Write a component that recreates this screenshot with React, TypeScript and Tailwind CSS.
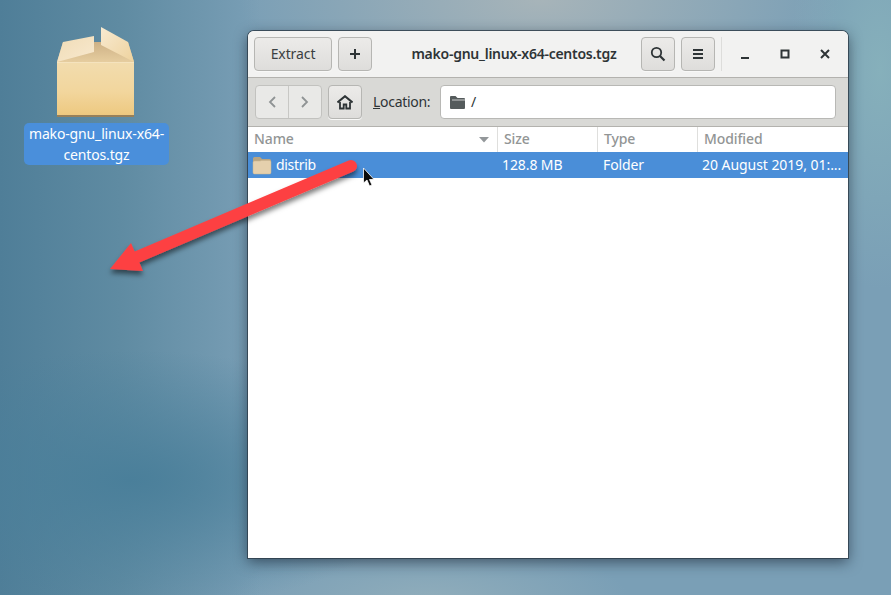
import React from "react";

function Btn({ className, children }: { className: string; children?: React.ReactNode }) {
  return (
    <div className={"flex items-center justify-center rounded-[4px] border border-[#b6b6b3] bg-gradient-to-b from-[#ecebe9] to-[#dedddb] shadow-[0_1px_0_#f8f8f7] text-[#2e3436] " + className}>
      {children}
    </div>
  );
}

function Box() {
  return (
    <svg width="82" height="96" viewBox="0 0 82 96" className="block">
      <defs>
        <linearGradient id="body" x1="0" y1="0" x2="0" y2="1">
          <stop offset="0" stopColor="#f2dcae" />
          <stop offset="0.55" stopColor="#f2d69d" />
          <stop offset="1" stopColor="#edc87f" />
        </linearGradient>
        <linearGradient id="top" x1="0" y1="0" x2="0" y2="1">
          <stop offset="0" stopColor="#cdb186" />
          <stop offset="1" stopColor="#e6cd9f" />
        </linearGradient>
        <linearGradient id="flapL" x1="0" y1="0" x2="1" y2="1">
          <stop offset="0" stopColor="#f0dcb6" />
          <stop offset="1" stopColor="#f8e9cf" />
        </linearGradient>
        <linearGradient id="flapR" x1="0" y1="0" x2="1" y2="1">
          <stop offset="0" stopColor="#f8ead1" />
          <stop offset="1" stopColor="#eed29d" />
        </linearGradient>
      </defs>
      <path d="M3 35 L9 15 L74 15 L80 35 Z" fill="url(#top)" />
      <path d="M3 35 H80 V88 Q80 89 79 89 H4 Q3 89 3 88 Z" fill="url(#body)" />
      <path d="M3 35 H80 V36 H3 Z" fill="#f7e6c4" opacity="0.7" />
      <rect x="3" y="88" width="77" height="2" fill="#97805a" />
      <path d="M3 35 L9 15 L40 9 L40 25 Z" fill="url(#flapL)" />
      <path d="M47 0 L74 15 L80 35 L47 18 Z" fill="url(#flapR)" />
    </svg>
  );
}

function Arrow() {
  return (
    <svg width="891" height="595" viewBox="0 0 891 595" className="absolute left-0 top-0 pointer-events-none">
      <defs>
        <filter id="sh" x="-10%" y="-10%" width="120%" height="130%">
          <feDropShadow dx="0" dy="4" stdDeviation="2.5" floodColor="#000" floodOpacity="0.5" />
        </filter>
      </defs>
      <g filter="url(#sh)">
        <path d="M351 166 L137 257" stroke="#fd4143" strokeWidth="12" strokeLinecap="round" fill="none" />
        <path d="M110 269 L131 243 L143 271 Z" fill="#fd4143" />
      </g>
    </svg>
  );
}

function Cursor() {
  return (
    <svg width="14" height="22" viewBox="0 0 14 22" className="absolute left-[362px] top-[167px]">
      <path d="M1.5 1 V16 L5 13 L7.5 19 L10 18 L7.5 12.5 L12 12.5 Z" fill="#0a0a0a" stroke="#fff" strokeWidth="0.8" />
    </svg>
  );
}

function FolderSmall() {
  return (
    <svg width="20" height="20" viewBox="0 0 20 20">
      <path d="M1 3.5 Q1 2 2.5 2 H8 L10 4 H17.5 Q19 4 19 5.5 V10 H1 Z" fill="#b9a582" />
      <path d="M1 7.5 Q1 6 2.5 6 H8 L9.5 5.5 H17.5 Q19 5.5 19 7 V17.5 Q19 19 17.5 19 H2.5 Q1 19 1 17.5 Z" fill="#e5d0ad" stroke="#c9b48f" strokeWidth="0.5" />
    </svg>
  );
}

export default function App() {
  return (
    <div
      className="relative w-[891px] h-[595px] overflow-hidden flex bg-[#7a9fb6] bg-[radial-gradient(ellipse_300px_130px_at_130px_480px,#4a7f9a_0%,transparent_100%),linear-gradient(90deg,#4f7e98_0px,#5f8ba2_120px,transparent_260px),radial-gradient(ellipse_300px_130px_at_540px_0px,#a7b4b9_0%,transparent_100%),radial-gradient(ellipse_90px_220px_at_880px_70px,#86b0bb_0%,transparent_100%),radial-gradient(ellipse_200px_60px_at_430px_600px,#90adbb_0%,transparent_100%)]"
      style={{ fontFamily: '"Noto Sans", "Open Sans", sans-serif' }}
    >
      <div className="w-[248px] shrink-0 flex flex-col items-start pt-[27px] pl-[24px]">
        <div className="ml-[30px] w-[82px] h-[96px]"><Box /></div>
        <div className="w-[145px] h-[42px] rounded-[5px] bg-[#4a8fdb] text-white text-[14px] tracking-[-0.15px] leading-[21px] text-center">
          <div>mako-gnu_linux-x64-</div>
          <div>centos.tgz</div>
        </div>
      </div>

      <div className="mt-[31px] w-[600px] h-[527px] rounded-t-[6px] overflow-hidden flex flex-col bg-white leading-[20px] tracking-[-0.1px] shadow-[0_0_0_1px_rgba(45,60,72,0.8),0_4px_14px_rgba(20,30,45,0.6)]">
        {/* header bar */}
        <div className="h-[47px] shrink-0 flex items-center pl-[6px] bg-[#f2f2f1] border-b border-[#b3b2ae]">
          <Btn className="w-[78px] h-[34px] text-[14px] text-[#3a3f41]">Extract</Btn>
          <Btn className="ml-[6px] w-[34px] h-[34px]">
            <svg width="14" height="14" viewBox="0 0 14 14"><path d="M7 2 V12 M2 7 H12" stroke="#2e3436" strokeWidth="2" /></svg>
          </Btn>
          <div className="flex-1 text-center text-[#2e3436] text-[14px] font-semibold pl-[15px] whitespace-nowrap tracking-[-0.25px]">mako-gnu_linux-x64-centos.tgz</div>
          <Btn className="w-[34px] h-[34px]">
            <svg width="16" height="16" viewBox="0 0 16 16" fill="none"><circle cx="6.5" cy="6.5" r="4.7" stroke="#2e3436" strokeWidth="1.8" /><path d="M10 10 L14.5 14.5" stroke="#2e3436" strokeWidth="2.2" /></svg>
          </Btn>
          <Btn className="ml-[6px] w-[34px] h-[34px]">
            <svg width="12" height="12" viewBox="0 0 12 12"><path d="M1 2 H11 M1 6 H11 M1 10 H11" stroke="#2e3436" strokeWidth="1.8" /></svg>
          </Btn>
          <div className="ml-[6px] w-px h-[34px] bg-[#dddddb]" />
          <div className="w-[126px] flex items-center justify-between pl-[17px] pr-[17px]">
            <svg width="12" height="12" viewBox="0 0 12 12"><path d="M2 10 H10" stroke="#2e3436" strokeWidth="2" /></svg>
            <svg width="10" height="10" viewBox="0 0 10 10" fill="none"><rect x="1.5" y="1.5" width="7" height="7" stroke="#2e3436" strokeWidth="2" /></svg>
            <svg width="12" height="12" viewBox="0 0 12 12"><path d="M2 2 L10 10 M10 2 L2 10" stroke="#2e3436" strokeWidth="2" /></svg>
          </div>
        </div>

        {/* location bar */}
        <div className="h-[49px] shrink-0 flex items-center pl-[7px] pr-[12px] bg-[#d9d9d6] border-b border-[#b3b2ae]">
          <div className="flex w-[67px] h-[34px] rounded-[4px] border border-[#c2c2bf] bg-[#e9e9e7]">
            <div className="w-[33px] flex items-center justify-center border-r border-[#c8c8c5]">
              <svg width="10" height="14" viewBox="0 0 10 14" fill="none"><path d="M8 2 L3 7 L8 12" stroke="#8f9394" strokeWidth="1.8" /></svg>
            </div>
            <div className="flex-1 flex items-center justify-center">
              <svg width="10" height="14" viewBox="0 0 10 14" fill="none"><path d="M2 2 L7 7 L2 12" stroke="#8f9394" strokeWidth="1.8" /></svg>
            </div>
          </div>
          <Btn className="ml-[6px] w-[34px] h-[34px]">
            <svg width="16" height="15" viewBox="0 0 16 15" fill="none"><path d="M0.5 7.5 L8 1.2 L15.5 7.5" stroke="#2e3436" strokeWidth="2" /><path d="M3 7 V13.5 H6.7 V9.5 H9.3 V13.5 H13 V7" stroke="#2e3436" strokeWidth="1.8" /></svg>
          </Btn>
          <div className="ml-[11px] w-[56px] text-[14px] text-[#2e3436] whitespace-nowrap tracking-[-0.3px]"><span className="underline">L</span>ocation:</div>
          <div className="ml-[11px] flex-1 h-[34px] rounded-[4px] border border-[#b8b8b5] bg-white flex items-center pl-[8px] text-[14px] text-[#2e3436]">
            <svg width="17" height="16" viewBox="0 0 17 16"><path d="M1 3 Q1 2 2 2 H6.5 L8.5 4 H15 Q16 4 16 5 V14 Q16 15 15 15 H2 Q1 15 1 14 Z" fill="#555b5c" /><path d="M3 6 H16" stroke="#e8e8e8" strokeWidth="0.8" /></svg>
            <span className="ml-[5px]">/</span>
          </div>
        </div>

        {/* column headers */}
        <div className="h-[25px] shrink-0 flex text-[14px] text-[#929595] font-medium bg-white">
          <div className="w-[250px] flex items-center pl-[6px] pr-[8px] border-r border-[#dfdfdd]">
            <span className="flex-1 pb-[2px]">Name</span>
            <svg width="10" height="6" viewBox="0 0 10 6"><path d="M0 0 H10 L5 5.5 Z" fill="#93979a" /></svg>
          </div>
          <div className="w-[100px] flex items-center pl-[6px] pb-[2px] border-r border-[#dfdfdd]">Size</div>
          <div className="w-[100px] flex items-center pl-[6px] pb-[2px] border-r border-[#dfdfdd]">Type</div>
          <div className="flex-1 flex items-center pl-[6px] pb-[2px]">Modified</div>
        </div>

        {/* selected row */}
        <div className="h-[26px] shrink-0 flex items-center bg-[#4a8ed8] text-white text-[14px]">
          <div className="w-[250px] flex items-center pl-[4px]">
            <FolderSmall />
            <span className="ml-[4px] tracking-[-0.3px]">distrib</span>
          </div>
          <div className="w-[100px] pl-[4px]">128.8 MB</div>
          <div className="w-[100px] pl-[5px]">Folder</div>
          <div className="flex-1 pl-[4px] whitespace-nowrap tracking-[-0.05px]">20 August 2019, 01:...</div>
        </div>
        <div className="flex-1 bg-white" />
      </div>

      <Arrow />
      <Cursor />
    </div>
  );
}
